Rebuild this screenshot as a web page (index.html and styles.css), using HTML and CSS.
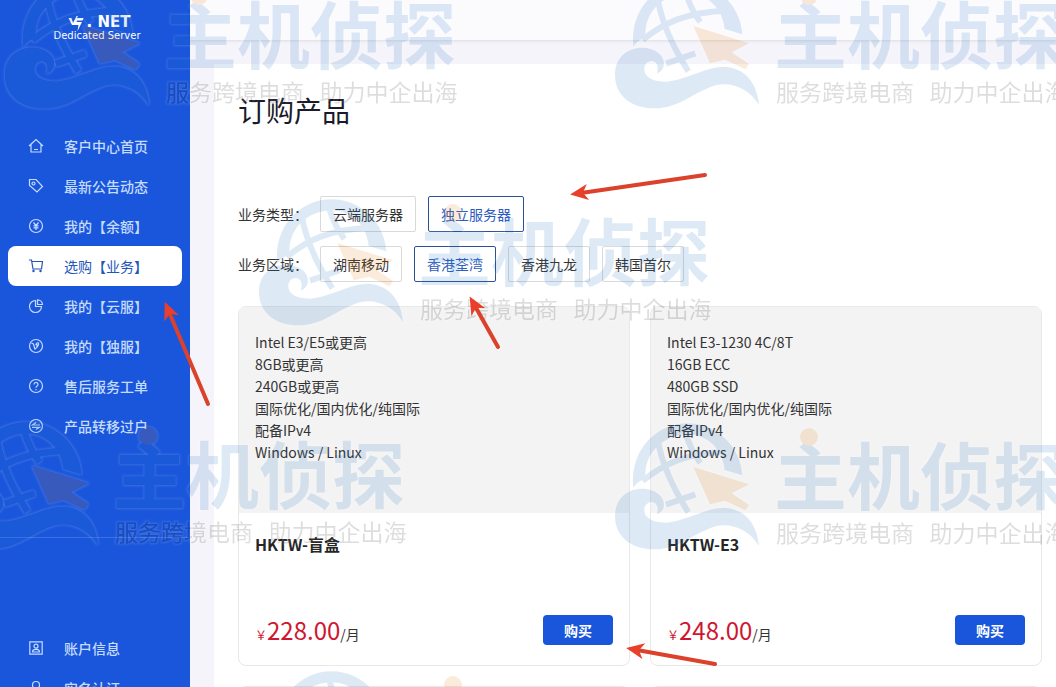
FILE: index.html
```html
<!DOCTYPE html>
<html lang="zh-CN">
  <head>
    <meta charset="UTF-8" />
    <meta name="viewport" content="width=device-width, initial-scale=1.0" />
    <title>订购产品</title>
    <link rel="stylesheet" href="styles.css">
  </head>
  <body>
    <aside class="sidebar">
      <a class="logo" href="#">
        <span class="logo-name">
          <svg class="logo-mark" viewBox="0 0 16 16" aria-hidden="true">
            <path d="M0 3l3 0 1.500 5L8 1l1.500 0-1 2H15l-1 2.500H8.500L8 7h5.500L9 16l1-6H3.500L0 3z" />
          </svg>
          <span>. NET</span>
        </span>
        <span class="logo-sub">Dedicated Server</span>
      </a>

      <nav class="menu">
        <a href="#">
          <svg class="icon" viewBox="0 0 16 16"><path d="M1 8l7-6.500L15 8M3 6.500V14h10V6.500M6 11.500h4" /></svg>
          客户中心首页
        </a>
        <a href="#">
          <svg class="icon" viewBox="0 0 16 16"><path d="M1.500 1.500h6.500l6.500 7-5.500 5.500-7.500-6.500z" /><circle cx="5.500" cy="5.500" r="1.500" /></svg>
          最新公告动态
        </a>
        <a href="#">
          <svg class="icon" viewBox="0 0 16 16"><circle cx="8" cy="8" r="6.500" /><path d="M5.500 4.500L8 7.500l2.500-3M8 7.500v4.500M5.500 7.800h5M5.500 9.800h5" /></svg>
          我的【余额】
        </a>
        <a class="active" href="#">
          <svg class="icon" viewBox="0 0 16 16"><path d="M1 2h2.500l1.500 9h8.500l1-7.500H4" /><circle cx="5.500" cy="13" r=".6" /><circle cx="12.500" cy="13" r=".6" /></svg>
          选购【业务】
        </a>
        <a href="#">
          <svg class="icon" viewBox="0 0 16 16"><path d="M7.500 2.500A6 6 0 1 0 13.500 8.500H7.500z" /><path d="M9.500 1.800V6.500h5A5 5 0 0 0 9.500 1.800z" /></svg>
          我的【云服】
        </a>
        <a href="#">
          <svg class="icon" viewBox="0 0 16 16"><circle cx="8" cy="8" r="6.500" /><path d="M3.500 5.500c2.500-.8 2 1.500 3.500 5.500 2-1.500 4-4 3.500-6-1.200-.6-2 0-2.500 1.500 1.500-.4 1.200.8.5 2" /></svg>
          我的【独服】
        </a>
        <a href="#">
          <svg class="icon" viewBox="0 0 16 16"><circle cx="8" cy="8" r="6.500" /><path d="M6 6.500a2 2 0 1 1 2.800 1.800c-.6.300-.8.600-.8 1.500M8 11v1.200" /></svg>
          售后服务工单
        </a>
        <a href="#">
          <svg class="icon" viewBox="0 0 16 16"><circle cx="8" cy="8" r="6.500" /><path d="M12 7H4.500L8 4.500M4 9.300h7.500L8 11.500" /></svg>
          产品转移过户
        </a>
      </nav>

      <nav class="menu menu-account">
        <a href="#">
          <svg class="icon" viewBox="0 0 16 16"><path d="M1.800 1.800h12.400v12.400H1.800zM4.500 12c0-3.500 7-3.500 7 0z" /><circle cx="8" cy="6.200" r="2" /></svg>
          账户信息
        </a>
        <a href="#">
          <svg class="icon" viewBox="0 0 16 16"><circle cx="8" cy="5" r="3.500" /><path d="M2 15c0-7 12-7 12 0" /></svg>
          实名认证
        </a>
      </nav>
    </aside>

    <div class="page">
      <header class="topbar"></header>

      <main class="content">
        <h1>订购产品</h1>

        <div class="filter">
          <span class="filter-label">业务类型：</span>
          <button type="button">云端服务器</button>
          <button type="button" class="selected">独立服务器</button>
        </div>
        <div class="filter">
          <span class="filter-label">业务区域：</span>
          <button type="button">湖南移动</button>
          <button type="button" class="selected">香港荃湾</button>
          <button type="button">香港九龙</button>
          <button type="button">韩国首尔</button>
        </div>

        <div class="products">
          <section class="card">
            <ul class="specs">
              <li>Intel E3/E5或更高</li>
              <li>8GB或更高</li>
              <li>240GB或更高</li>
              <li>国际优化/国内优化/纯国际</li>
              <li>配备IPv4</li>
              <li>Windows / Linux</li>
            </ul>
            <h2>HKTW-盲盒</h2>
            <div class="card-footer">
              <p class="price"><small>￥</small><strong>228.00</strong>/月</p>
              <button type="button" class="buy">购买</button>
            </div>
          </section>

          <section class="card">
            <ul class="specs">
              <li>Intel E3-1230 4C/8T</li>
              <li>16GB ECC</li>
              <li>480GB SSD</li>
              <li>国际优化/国内优化/纯国际</li>
              <li>配备IPv4</li>
              <li>Windows / Linux</li>
            </ul>
            <h2>HKTW-E3</h2>
            <div class="card-footer">
              <p class="price"><small>￥</small><strong>248.00</strong>/月</p>
              <button type="button" class="buy">购买</button>
            </div>
          </section>

          <section class="card"><div class="specs"></div></section>
          <section class="card"><div class="specs"></div></section>
        </div>
      </main>
    </div>

    <svg class="overlay" aria-hidden="true">
      <defs>
        <filter id="halo" x="-5%" y="-5%" width="110%" height="110%" color-interpolation-filters="sRGB">
          <feMorphology in="SourceAlpha" operator="dilate" radius="1" result="fat" />
          <feGaussianBlur in="fat" stdDeviation="1" result="soft" />
          <feFlood flood-color="#fff" />
          <feComposite in2="soft" operator="in" />
          <feComposite in2="SourceAlpha" operator="out" result="glow" />
          <feMerge>
            <feMergeNode in="glow" />
            <feMergeNode in="SourceGraphic" />
          </feMerge>
        </filter>

        <marker id="head" viewBox="-8 -8 20 16" refX="0" refY="0" markerWidth="20" markerHeight="16" markerUnits="userSpaceOnUse" orient="auto">
          <path d="M11 0L-7-8-2 0-7 8z" />
        </marker>

        <g id="watermark" class="watermark" filter="url(#halo)">
          <g transform="scale(.3333) translate(-45 -69)">
            <!-- globe -->
            <path d="M100 263C88 150 170 70 262 70c88 0 160 70 165 156l-53-16c-6-62-52-107-112-107-75 2-132 60-125 132-15 6-28 14-37 28z" />
            <path class="line" d="M173 118c12 75 45 145 92 219M255 95c12 40 25 66 46 94M128 243c60-50 130-84 250-88M198 314l88-31" />
            <!-- wave -->
            <path d="M45 348c0-55 40-82 80-82 40 0 67 22 67 47 0 20-14 28-22 31 8-20 0-38-15-38-14 0-23 12-22 27 2 25 32 35 67 35 70-10 120-45 175-45 55 5 95 40 102 115-27-45-77-70-127-60-70 20-110 70-185 70-75 0-120-40-120-100z" />
            <!-- cursor -->
            <path class="orange" d="M280 201l168 52-53 27 52 35-10 16-62-29-45 11z" />
          </g>
          <text class="brand" x="159" y="81">主机侦探</text>
          <circle class="orange" cx="194" cy="14" r="9" />
          <text class="slogan" x="161" y="119">服务跨境电商&#160;&#160;&#160;助力中企出海</text>
        </g>
      </defs>

      <use href="#watermark" x="5" y="-18" />
      <use href="#watermark" x="615" y="-18" />
      <use href="#watermark" x="259" y="199" />
      <use href="#watermark" x="-46" y="422" />
      <use href="#watermark" x="615" y="423" />
      <use href="#watermark" x="259" y="671" />

      <g class="arrows">
        <path d="M705 175L581 193" />
        <path d="M208 404l-39-92" />
        <path d="M498 347l-23-41" />
        <path d="M715 664l-78-14" />
      </g>
    </svg>
  </body>
</html>
```

FILE: styles.css
```css
:root {
  --primary: #1a56db;
  --page-bg: #f4f4fa;
  --text: #333333;
  --price: #d0162f;
}

* {
  box-sizing: border-box;
}

body {
  margin: 0;
  height: 100vh;
  display: flex;
  position: relative;
  overflow: hidden;
  background-color: var(--page-bg);
  color: var(--text);
  font-family: "Noto Sans CJK SC", sans-serif;
  font-size: 14px;
  line-height: 22px;
}

button {
  font-family: inherit;
  font-size: 14px;
  cursor: pointer;
}

/* sidebar */
.sidebar {
  width: 190px;
  flex-shrink: 0;
  background-color: var(--primary);
  overflow: hidden;
}

.logo {
  display: flex;
  flex-direction: column;
  align-items: center;
  height: 126px;
  padding: 15px 0 0 4px;
  color: #ffffff;
  text-decoration: none;
}

.logo-name {
  display: flex;
  align-items: center;
  gap: 2px;
  height: 15px;
  padding-left: 4px;
  font-family: "DejaVu Sans", sans-serif;
  font-size: 15px;
  font-weight: bold;
  line-height: 15px;
}

.logo-mark {
  width: 17px;
  height: 16px;
  fill: #ffffff;
}

.logo-sub {
  font-family: "DejaVu Sans", sans-serif;
  font-size: 10px;
  line-height: 12px;
}

.menu {
  padding: 0 8px;
}

.menu a {
  display: flex;
  align-items: center;
  gap: 20px;
  height: 40px;
  padding-left: 20px;
  border-radius: 8px;
  color: #c5dcff;
  font-weight: 500;
  text-decoration: none;
}

.menu a.active {
  background-color: #ffffff;
  color: #2456b8;
  font-weight: 400;
}

.menu-account {
  margin-top: 91px;
  padding-top: 90px;
  border-top: 1px solid rgba(255, 255, 255, 0.15);
}

.icon {
  width: 16px;
  height: 16px;
  fill: none;
  stroke: currentColor;
  stroke-width: 1.2;
}

/* page */
.page {
  flex: 1;
  min-width: 0;
  display: flex;
  flex-direction: column;
}

.topbar {
  height: 40px;
  flex-shrink: 0;
  background-color: #fbfbfd;
  box-shadow: 0 1px 3px rgba(0, 0, 0, 0.1);
}

.content {
  flex: 1;
  margin: 24px 0 0 24px;
  padding: 26px 14px 0 24px;
  background-color: #ffffff;
}

h1 {
  margin: 0 0 66px;
  color: #1a1a2a;
  font-size: 28px;
  font-weight: 400;
  line-height: 40px;
}

.filter {
  display: flex;
  align-items: center;
  gap: 12px;
  margin-bottom: 14px;
}

.filter-label {
  width: 70px;
}

.filter button {
  height: 36px;
  padding: 0 12px;
  background-color: #ffffff;
  border: 1px solid #d9d9d9;
  border-radius: 2px;
  color: var(--text);
}

.filter button.selected {
  border-color: #2a5194;
  color: #2a5cc0;
}

/* product cards */
.products {
  display: grid;
  grid-template-columns: 1fr 1fr;
  gap: 20px;
  margin-top: 24px;
}

.card {
  border: 1px solid #e8e8e8;
  border-radius: 8px;
  overflow: hidden;
}

.specs {
  height: 206px;
  margin: 0;
  padding: 24px 16px;
  background-color: #f3f3f3;
  list-style: none;
}

.card h2 {
  margin: 20px 16px 60px;
  color: #262626;
  font-size: 16px;
  font-weight: bold;
  line-height: 22px;
}

.card-footer {
  display: flex;
  justify-content: space-between;
  align-items: center;
  padding: 0 16px 20px;
}

.price {
  height: 30px;
  margin: 0;
  line-height: 30px;
}

.price small {
  color: var(--price);
  font-size: 12px;
}

.price strong {
  color: var(--price);
  font-size: 24px;
  font-weight: 400;
}

.buy {
  width: 70px;
  height: 30px;
  padding: 0;
  background-color: var(--primary);
  border: none;
  border-radius: 4px;
  color: #ffffff;
  font-weight: bold;
}

/* watermark and pointer arrows */
.overlay {
  position: absolute;
  top: 0;
  left: 0;
  width: 100%;
  height: 100%;
  pointer-events: none;
}

.watermark {
  fill: #1a70c6;
  opacity: 0.14;
}

.watermark .line {
  fill: none;
  stroke: #1a70c6;
  stroke-width: 18;
}

.watermark .orange {
  fill: #ea7705;
}

.watermark .brand {
  font-size: 73px;
  font-weight: bold;
}

.watermark .slogan {
  fill: #141414;
  font-size: 23px;
}

.arrows path {
  fill: none;
  stroke: #dc412b;
  stroke-width: 4;
  stroke-linecap: round;
  marker-end: url(#head);
}

#head path {
  fill: #e8402a;
  stroke: none;
}
```
